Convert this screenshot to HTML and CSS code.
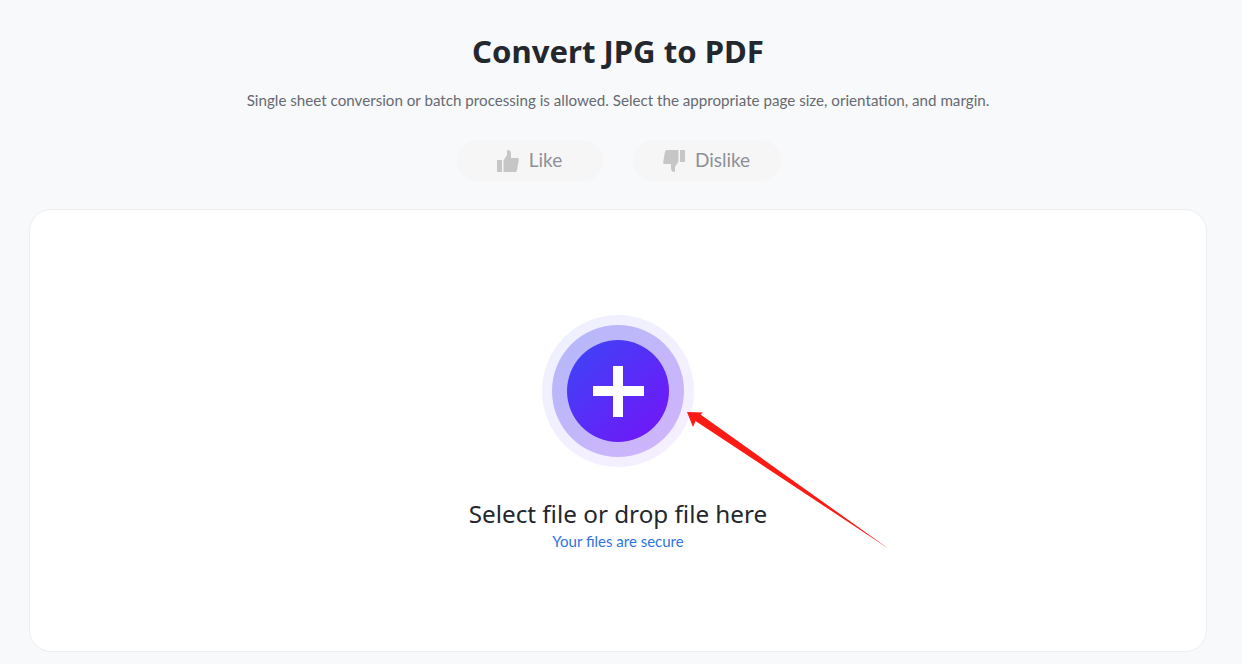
FILE: index.html
```html
<!DOCTYPE html>
<html lang="en">
<head>
    <meta charset="UTF-8">
    <title>Convert JPG to PDF</title>
    <link rel="stylesheet" href="styles.css">
</head>
<body>
    <div class="page">
        <h1 class="title">Convert JPG to PDF</h1>
        <p class="subtitle">Single sheet conversion or batch processing is allowed. Select the appropriate page size, orientation, and margin.</p>
        <div class="votes">
            <button class="vote vote-like">
                <svg class="vote-icon" viewBox="0 0 22 22"><path d="M0 10h5v12H0zM6.500 10.500 10 5V0.500c0-.3.300-.5.600-.5C12.500 0 14 1.300 14 3.500V8h6.500C21.500 8 22 8.800 21.800 9.800L20 20.200C19.800 21.300 19 22 18 22H6.500z"/></svg>
                <span class="vote-text">Like</span>
            </button>
            <button class="vote vote-dislike">
                <svg class="vote-icon" viewBox="0 0 22 22"><path d="M22 12h-5V0h5zM15.500 11.500 12 17v4.500c0 .3-.3.500-.6.500C9.500 22 8 20.700 8 18.500V14H1.500C.5 14 0 13.200.2 12.200L2 1.800C2.200.7 3 0 4 0h11.500z"/></svg>
                <span class="vote-text">Dislike</span>
            </button>
        </div>
        <div class="card">
            <div class="upload-ring-outer">
                <div class="upload-ring-inner">
                    <div class="upload-btn">
                        <span class="plus"></span>
                    </div>
                </div>
            </div>
            <div class="upload-label">Select file or drop file here</div>
            <div class="upload-note">Your files are secure</div>
        </div>
    </div>
    <svg class="arrow" width="1242" height="664" viewBox="0 0 1242 664"><polygon points="687,412 703,412.500 700.500,414.500 889,549 695.500,421 693,427"/></svg>
</body>
</html>
```

FILE: styles.css
```css
* {
    box-sizing: border-box;
}
body {
    margin: 0;
    background-color: #f8f9fb;
    font-family: "Noto Sans", Arial, sans-serif;
    color: #23272e;
}
.page {
    height: 664px;
    overflow: hidden;
    padding: 28px 35px 0 29px;
    display: flex;
    flex-direction: column;
    align-items: center;
}
.title {
    margin: 0;
    height: 46px;
    font-size: 31.100px;
    line-height: 46px;
    font-weight: 700;
}
.subtitle {
    margin: 15px 0 0;
    height: 22px;
    font-family: Lato, Arial, sans-serif;
    font-size: 15.170px;
    line-height: 22px;
    color: #666a70;
}
.votes {
    display: flex;
    gap: 30px;
    margin: 29px 0 0 1px;
}
.vote {
    display: flex;
    align-items: center;
    justify-content: center;
    gap: 10px;
    height: 41px;
    border: none;
    border-radius: 21px;
    background-color: #f6f6f7;
    font-family: Lato, Arial, sans-serif;
    font-size: 19px;
    color: #8e9096;
    padding: 0;
}
.vote-like {
    width: 146px;
}
.vote-dislike {
    width: 148px;
}
.vote-icon {
    width: 22px;
    height: 22px;
    fill: #c6c6c7;
}
.vote-text {
    padding-bottom: 2px;
}
.card {
    width: 100%;
    height: 443px;
    margin-top: 28px;
    flex-shrink: 0;
    background-color: #fff;
    border: 1px solid #eceef1;
    border-radius: 22px;
    display: flex;
    flex-direction: column;
    align-items: center;
    padding-top: 105px;
}
.upload-ring-outer {
    width: 152px;
    height: 152px;
    border-radius: 50%;
    background: linear-gradient(135deg, #eef0ff, #f6efff);
    display: flex;
    align-items: center;
    justify-content: center;
}
.upload-ring-inner {
    width: 132px;
    height: 132px;
    border-radius: 50%;
    background: linear-gradient(135deg, #b3b8fa, #d2b4fb);
    display: flex;
    align-items: center;
    justify-content: center;
}
.upload-btn {
    width: 102px;
    height: 102px;
    border-radius: 50%;
    background: linear-gradient(135deg, #3c46f6, #7513f8);
    display: flex;
    align-items: center;
    justify-content: center;
}
.plus {
    width: 51px;
    height: 51px;
    background:
        linear-gradient(#fff, #fff) center / 10px 51px no-repeat,
        linear-gradient(#fff, #fff) center / 51px 10px no-repeat;
}
.upload-label {
    margin-top: 29px;
    font-size: 24.250px;
    line-height: 36px;
}
.upload-note {
    font-family: Lato, Arial, sans-serif;
    font-size: 15px;
    line-height: 19px;
    color: #2f74e0;
}
.arrow {
    position: absolute;
    left: 0;
    top: 0;
    fill: #fb1a14;
}
```
